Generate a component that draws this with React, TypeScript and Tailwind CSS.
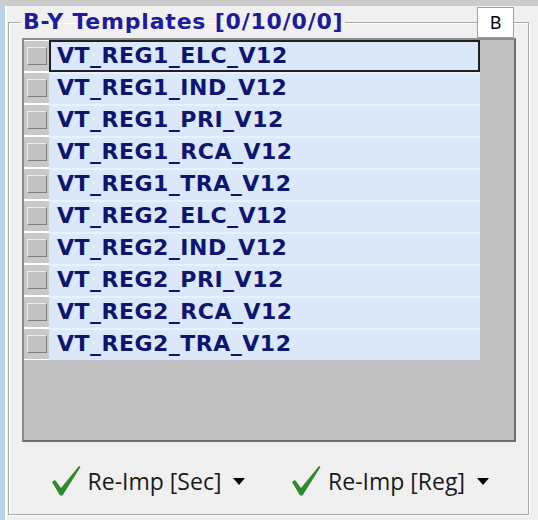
import React from "react"

const items = [
	"VT_REG1_ELC_V12",
	"VT_REG1_IND_V12",
	"VT_REG1_PRI_V12",
	"VT_REG1_RCA_V12",
	"VT_REG1_TRA_V12",
	"VT_REG2_ELC_V12",
	"VT_REG2_IND_V12",
	"VT_REG2_PRI_V12",
	"VT_REG2_RCA_V12",
	"VT_REG2_TRA_V12",
]

function Check() {
	return (
		<svg width="29" height="30" viewBox="0 0 29 30">
			<path d="M0 16 L3 14 L9 22 L27 0 L28.5 1 L10.5 29.5 L8 29.5 Z" fill="#2b8a2b" />
		</svg>
	)
}

function Caret() {
	return (
		<svg width="12" height="7" viewBox="0 0 12 7">
			<polygon points="0,0 12,0 6,7" fill="#000" />
		</svg>
	)
}

function ReImp({ label }: { label: string }) {
	return (
		<div className="flex items-center">
			<Check />
			<span className="ml-[7px] text-[23px] leading-none text-[#1a1a1a] font-['Open_Sans',sans-serif]">{label}</span>
			<span className="ml-[12px] flex items-center"><Caret /></span>
		</div>
	)
}

export default function App() {
	return (
		<div className="w-[538px] h-[520px] bg-[#f0f0f0] flex flex-col overflow-hidden">
			{/* top strip */}
			<div className="h-[6px] shrink-0 bg-[#cbcbcb]" />
			<div className="flex flex-1">
				<div className="w-[5px] bg-[#b9d1ea]" />
				<div className="w-[2px] bg-white" />
				<div className="flex-1 pt-[3px] pl-[1px] pr-[9px] pb-[5px]">
					<fieldset className="relative h-full flex flex-col border border-[#a9a9a9] shadow-[inset_1px_1px_0_#fff,1px_1px_0_#fff] pl-[13px] pr-[12px]">
						<legend className="-ml-[1px] px-[2px] h-[26px] text-[22px] leading-[26px] font-bold tracking-[0.8px] text-[#1c1c9c] font-['DejaVu_Sans',sans-serif]">
							B-Y Templates [0/10/0/0]
						</legend>

						{/* list */}
						<div className="relative mt-[3px] h-[404px] shrink-0 bg-[#c0c0c0] border-2 border-[#8c8c8c] border-r-[#6e6e6e] border-b-[#6e6e6e]">
							<div className="absolute -top-[33px] right-0 w-[37px] h-[31px] bg-white border border-[#a0a0a0] flex items-center justify-center text-[18px] text-black font-['Noto_Sans',sans-serif]">
								B
							</div>
							{items.map((name, i) => (
								<div key={name} className="flex h-[32px]">
									<div className="w-[25px] flex items-center justify-center bg-[#c8c8c8] border-y border-white">
										<div className="w-[20px] h-[18px] bg-[#c2c2c2] border border-t-[#ececec] border-l-[#ececec] border-r-[#7f7f7f] border-b-[#7f7f7f]" />
									</div>
									<div
										className={
											i === 0
												? "w-[431px] flex items-center pl-[6px] bg-[#dae8f9] border-2 border-[#202020]"
												: "w-[431px] flex items-center pl-[6px] bg-[#dae8f9] border-2 border-[#dae8f9] border-t-[#e8f1fc]"
										}
									>
										<span className="text-[22px] leading-none font-bold tracking-[0.5px] text-[#0d1570] font-['DejaVu_Sans',sans-serif]">
											{name}
										</span>
									</div>
								</div>
							))}
						</div>

						{/* buttons */}
						<div className="flex-1 grid grid-cols-2 items-center pt-[6px]">
							<div className="flex justify-center pl-[6px]"><ReImp label="Re-Imp [Sec]" /></div>
							<div className="flex justify-center pr-[4px]"><ReImp label="Re-Imp [Reg]" /></div>
						</div>
					</fieldset>
				</div>
			</div>
		</div>
	)
}
